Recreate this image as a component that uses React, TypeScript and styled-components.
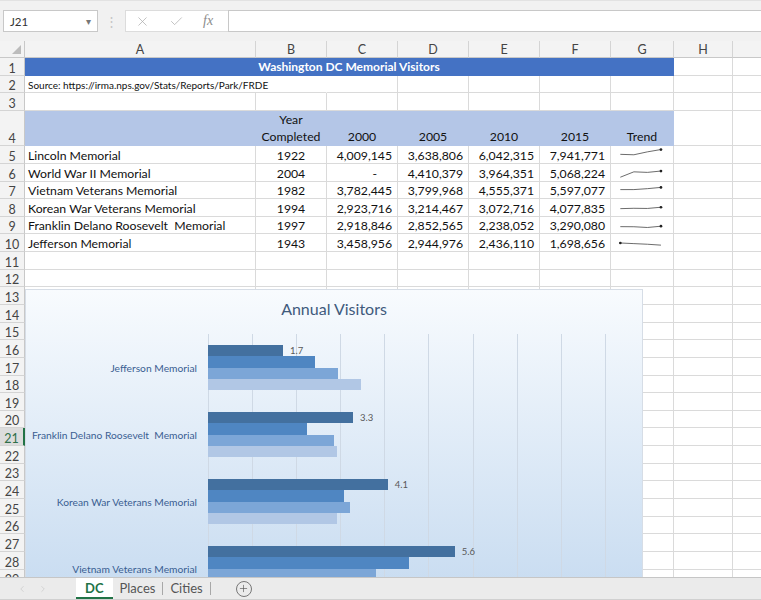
import React from 'react';
import styled, { createGlobalStyle } from 'styled-components';
import { X, Check, ChevronLeft, ChevronRight, Plus } from 'lucide-react';

const GlobalStyle = createGlobalStyle`
  html, body {
    margin: 0;
    padding: 0;
    background: #fff;
  }
  body {
    font-family: Lato, 'Noto Sans', sans-serif;
    overflow: hidden;
  }
`;

const COLUMNS = [
  { letter: 'A', width: 231 },
  { letter: 'B', width: 71 },
  { letter: 'C', width: 71 },
  { letter: 'D', width: 71 },
  { letter: 'E', width: 71 },
  { letter: 'F', width: 71 },
  { letter: 'G', width: 63 },
  { letter: 'H', width: 59 },
  { letter: '', width: 64 },
];

const ROW_H = 17.65;

const memorials = [
  { name: 'Lincoln Memorial', year: 1922, values: [4009145, 3638806, 6042315, 7941771] },
  { name: 'World War II Memorial', year: 2004, values: [0, 4410379, 3964351, 5068224] },
  { name: 'Vietnam Veterans Memorial', year: 1982, values: [3782445, 3799968, 4555371, 5597077] },
  { name: 'Korean War Veterans Memorial', year: 1994, values: [2923716, 3214467, 3072716, 4077835] },
  { name: 'Franklin Delano Roosevelt  Memorial', year: 1997, values: [2918846, 2852565, 2238052, 3290080] },
  { name: 'Jefferson Memorial', year: 1943, values: [3458956, 2944976, 2436110, 1698656] },
];

// 2015, 2010, 2005, 2000 from top to bottom in each group
const SERIES_COLORS = ['#43709f', '#4f86c2', '#7ca6d7', '#b1c7e5'];

const fmt = (n: number) => n.toLocaleString('en-US');

function Sparkline({ values }: { values: number[] }) {
  const xs = [7, 22, 37, 52];
  const y = (v: number) => 3 + (7.94 - v / 1e6) * 1.35;
  const pts = values.map((v, i) => `${xs[i]},${y(v).toFixed(2)}`).join(' ');
  const maxI = values.indexOf(Math.max(...values));
  return (
    <svg width="62" height="17" viewBox="0 0 62 17">
      <polyline points={pts} fill="none" stroke="#4a4a4a" strokeWidth="0.9" />
      <circle cx={xs[maxI]} cy={y(values[maxI])} r="1.5" fill="#222" />
    </svg>
  );
}

function Chart() {
  const cats = [...memorials].reverse();
  return (
    <ChartBox>
      <ChartTitle>Annual Visitors</ChartTitle>
      {cats.map((c) => {
        const series = [...c.values].reverse();
        return (
          <CategoryRow key={c.name}>
            <CatLabel>{c.name}</CatLabel>
            <BarArea>
              {series.map((v, i) => (
                <BarLine key={i}>
                  <Bar $color={SERIES_COLORS[i]} style={{ width: (v / 1e6) * 44.1 }} />
                  {i === 0 && <ValueLabel>{(v / 1e6).toFixed(1)}</ValueLabel>}
                </BarLine>
              ))}
            </BarArea>
          </CategoryRow>
        );
      })}
    </ChartBox>
  );
}

function EmptyCells({ from }: { from: number }) {
  return (
    <>
      {COLUMNS.slice(from).map((c, i) => (
        <Cell key={i} $w={c.width} />
      ))}
    </>
  );
}

function SheetRow({ n }: { n: number }) {
  const h = n === 4 ? ROW_H * 2 : ROW_H;
  let content: React.ReactNode = <EmptyCells from={0} />;

  if (n === 1) {
    content = (
      <>
        <Cell $w={649} $fill="#4472c4" $align="center">
          <TitleText>Washington DC Memorial Visitors</TitleText>
        </Cell>
        <EmptyCells from={7} />
      </>
    );
  } else if (n === 2) {
    content = (
      <>
        <Cell $w={302} $noRightLine $bottom>
          <SourceText>Source: https://irma.nps.gov/Stats/Reports/Park/FRDE</SourceText>
        </Cell>
        <EmptyCells from={2} />
      </>
    );
  } else if (n === 4) {
    content = (
      <>
        <Cell $w={231} $fill="#b4c6e7" />
        <Cell $w={71} $fill="#b4c6e7" $align="center" $bottom>
          <HeadText>
            Year
            <br />
            Completed
          </HeadText>
        </Cell>
        {['2000', '2005', '2010', '2015'].map((y) => (
          <Cell key={y} $w={71} $fill="#b4c6e7" $align="center" $bottom>
            <HeadText>{y}</HeadText>
          </Cell>
        ))}
        <Cell $w={63} $fill="#b4c6e7" $align="center" $bottom>
          <HeadText>Trend</HeadText>
        </Cell>
        <EmptyCells from={7} />
      </>
    );
  } else if (n >= 5 && n <= 10) {
    const m = memorials[n - 5];
    content = (
      <>
        <Cell $w={231} $bottom>
          <DataText>{m.name}</DataText>
        </Cell>
        <Cell $w={71} $align="center" $bottom>
          <DataText>{m.year}</DataText>
        </Cell>
        {m.values.map((v, i) => (
          <Cell key={i} $w={71} $align="flex-end" $pr={v === 0 ? 20 : 5} $bottom>
            <DataText>{v === 0 ? '-' : fmt(v)}</DataText>
          </Cell>
        ))}
        <Cell $w={63}>
          <Sparkline values={m.values} />
        </Cell>
        <EmptyCells from={7} />
      </>
    );
  }

  return (
    <Row style={{ height: h }}>
      <RowNum $selected={n === 21}>{n}</RowNum>
      {content}
    </Row>
  );
}

export default function App() {
  const rows = Array.from({ length: 30 }, (_, i) => i + 1);
  return (
    <Window>
      <GlobalStyle />
      <FormulaBar>
        <NameBox>
          <span>J21</span>
          <Caret>▾</Caret>
        </NameBox>
        <Grip>⋮</Grip>
        <FormulaIcons>
          <X size={15} strokeWidth={1.1} />
          <Check size={15} strokeWidth={1.1} />
          <Fx>fx</Fx>
        </FormulaIcons>
        <FormulaInput />
      </FormulaBar>

      <Sheet>
        <HeaderRow>
          <Corner>
            <CornerTriangle />
          </Corner>
          {COLUMNS.map((c, i) => (
            <ColHead key={i} $w={c.width}>
              {c.letter}
            </ColHead>
          ))}
        </HeaderRow>
        {rows.map((n) => (
          <SheetRow key={n} n={n} />
        ))}
        <Chart />
      </Sheet>

      <TabBar>
        <NavArrows>
          <ChevronLeft size={10} strokeWidth={1.5} />
          <ChevronRight size={10} strokeWidth={1.5} />
        </NavArrows>
        <Tab $active>DC</Tab>
        <Tab>Places</Tab>
        <TabSep />
        <Tab>Cities</Tab>
        <TabSep />
        <AddSheet>
          <Plus size={11} strokeWidth={1.4} />
        </AddSheet>
      </TabBar>
    </Window>
  );
}

const Window = styled.div`
  width: 761px;
  height: 600px;
  display: flex;
  flex-direction: column;
  overflow: hidden;
  background: #fff;
`;

const FormulaBar = styled.div`
  flex: 0 0 41px;
  box-sizing: border-box;
  background: #f1f1f1;
  border-top: 1px solid #e2e2e2;
  display: flex;
  align-items: flex-start;
  padding: 9px 0 0 3px;
`;

const NameBox = styled.div`
  width: 95px;
  height: 22px;
  box-sizing: border-box;
  background: #fff;
  border: 1px solid #c8c8c8;
  display: flex;
  align-items: center;
  justify-content: space-between;
  padding: 0 6px 0 6px;
  font-size: 11.5px;
  color: #333;
`;

const Caret = styled.span`
  font-size: 10px;
  color: #777;
`;

const Grip = styled.div`
  width: 27px;
  height: 22px;
  line-height: 22px;
  text-align: center;
  color: #c4c4c4;
  font-size: 13px;
`;

const FormulaIcons = styled.div`
  width: 103px;
  height: 22px;
  box-sizing: border-box;
  background: #fff;
  border: 1px solid #dcdcdc;
  border-right: none;
  display: flex;
  align-items: center;
  gap: 19px;
  padding-left: 9px;
  color: #a8a8a8;
`;

const Fx = styled.i`
  font-family: 'Liberation Serif', serif;
  font-size: 14px;
  color: #8c8c8c;
`;

const FormulaInput = styled.div`
  flex: 1;
  height: 22px;
  box-sizing: border-box;
  background: #fff;
  border: 1px solid #c8c8c8;
  border-right: none;
`;

const Sheet = styled.div`
  flex: 1;
  position: relative;
  overflow: hidden;
`;

const HeaderRow = styled.div`
  display: flex;
  height: 17px;
`;

const Corner = styled.div`
  flex: 0 0 25px;
  box-sizing: border-box;
  background: #f3f3f3;
  border-right: 1px solid #c8c8c8;
  border-bottom: 1px solid #c8c8c8;
  position: relative;
`;

const CornerTriangle = styled.div`
  position: absolute;
  right: 3px;
  bottom: 3px;
  width: 0;
  height: 0;
  border-left: 9px solid transparent;
  border-bottom: 9px solid #bcbcbc;
`;

const ColHead = styled.div<{ $w: number }>`
  flex: 0 0 ${(p) => p.$w}px;
  box-sizing: border-box;
  background: #f3f3f3;
  border-right: 1px solid #d4d4d4;
  border-bottom: 1px solid #c8c8c8;
  display: flex;
  align-items: center;
  justify-content: center;
  font-size: 12.5px;
  color: #444;
`;

const Row = styled.div`
  display: flex;
`;

const RowNum = styled.div<{ $selected?: boolean }>`
  flex: 0 0 25px;
  box-sizing: border-box;
  background: ${(p) => (p.$selected ? '#dcdcdc' : '#f3f3f3')};
  color: ${(p) => (p.$selected ? '#2f6f49' : '#444')};
  border-right: ${(p) => (p.$selected ? '2px solid #217346' : '1px solid #c8c8c8')};
  border-bottom: 1px solid #d4d4d4;
  display: flex;
  align-items: flex-end;
  justify-content: center;
  font-size: 12.5px;
  line-height: 13px;
  overflow: hidden;
`;

const Cell = styled.div<{
  $w: number;
  $fill?: string;
  $align?: string;
  $pr?: number;
  $bottom?: boolean;
  $noRightLine?: boolean;
}>`
  flex: 0 0 ${(p) => p.$w}px;
  box-sizing: border-box;
  background: ${(p) => p.$fill ?? '#fff'};
  border-right: 1px solid ${(p) => p.$fill ?? (p.$noRightLine ? '#fff' : '#dadada')};
  border-bottom: 1px solid ${(p) => p.$fill ?? '#dadada'};
  display: flex;
  align-items: ${(p) => (p.$bottom ? 'flex-end' : 'center')};
  justify-content: ${(p) => p.$align ?? 'flex-start'};
  padding: 0 ${(p) => p.$pr ?? 3}px 0 3px;
  overflow: hidden;
  white-space: pre;
`;

const DataText = styled.span`
  font-size: 12.25px;
  line-height: 14px;
  color: #111;
`;

const TitleText = styled.span`
  font-size: 12px;
  font-weight: 700;
  color: #fff;
`;

const SourceText = styled.span`
  font-size: 10px;
  line-height: 14px;
  color: #111;
`;

const HeadText = styled.span`
  font-size: 12.25px;
  line-height: 16.5px;
  color: #111;
  text-align: center;
`;

const ChartBox = styled.div`
  position: absolute;
  left: 25px;
  top: 248px;
  width: 618px;
  height: 340px;
  box-sizing: border-box;
  border: 1px solid #d6dde6;
  background: linear-gradient(#f8fbfe, #c2d8ef);
  display: flex;
  flex-direction: column;
`;

const ChartTitle = styled.div`
  flex: 0 0 44px;
  box-sizing: border-box;
  padding-top: 9px;
  text-align: center;
  font-size: 16px;
  line-height: 20px;
  color: #405a7c;
`;

const CategoryRow = styled.div`
  flex: 0 0 67px;
  display: flex;
`;

const CatLabel = styled.div`
  flex: 0 0 182px;
  box-sizing: border-box;
  padding-right: 11px;
  display: flex;
  align-items: center;
  justify-content: flex-end;
  white-space: pre;
  font-size: 10.25px;
  color: #3a5e92;
`;

const BarArea = styled.div`
  flex: 0 0 400px;
  box-sizing: border-box;
  padding: 11px 0;
  display: flex;
  flex-direction: column;
  background-image: repeating-linear-gradient(
    to right,
    #cfd9e5 0 1px,
    transparent 1px 44.1px
  );
`;

const BarLine = styled.div`
  flex: 0 0 11.25px;
  display: flex;
  align-items: center;
`;

const Bar = styled.div<{ $color: string }>`
  height: 100%;
  background: ${(p) => p.$color};
`;

const ValueLabel = styled.span`
  margin-left: 7px;
  font-size: 9.5px;
  color: #595959;
`;

const TabBar = styled.div`
  flex: 0 0 23px;
  box-sizing: border-box;
  background: #ebebeb;
  border-top: 1px solid #c6c6c6;
  border-bottom: 1px solid #d0d0d0;
  display: flex;
  align-items: stretch;
  font-size: 13px;
`;

const NavArrows = styled.div`
  width: 76px;
  display: flex;
  align-items: center;
  gap: 11px;
  padding-left: 17px;
  box-sizing: border-box;
  color: #c4c4c4;
`;

const Tab = styled.div<{ $active?: boolean }>`
  display: flex;
  align-items: center;
  padding: 0 ${(p) => (p.$active ? '9px' : '7px')};
  background: ${(p) => (p.$active ? '#fff' : 'transparent')};
  color: ${(p) => (p.$active ? '#217346' : '#555')};
  font-weight: ${(p) => (p.$active ? 700 : 400)};
  border-bottom: 2px solid ${(p) => (p.$active ? '#217346' : 'transparent')};
`;

const TabSep = styled.div`
  width: 1px;
  margin: 4px 0;
  background: #a8a8a8;
`;

const AddSheet = styled.div`
  align-self: center;
  margin-left: 25px;
  width: 14px;
  height: 14px;
  border-radius: 50%;
  border: 1px solid #777;
  display: flex;
  align-items: center;
  justify-content: center;
  color: #555;
`;
